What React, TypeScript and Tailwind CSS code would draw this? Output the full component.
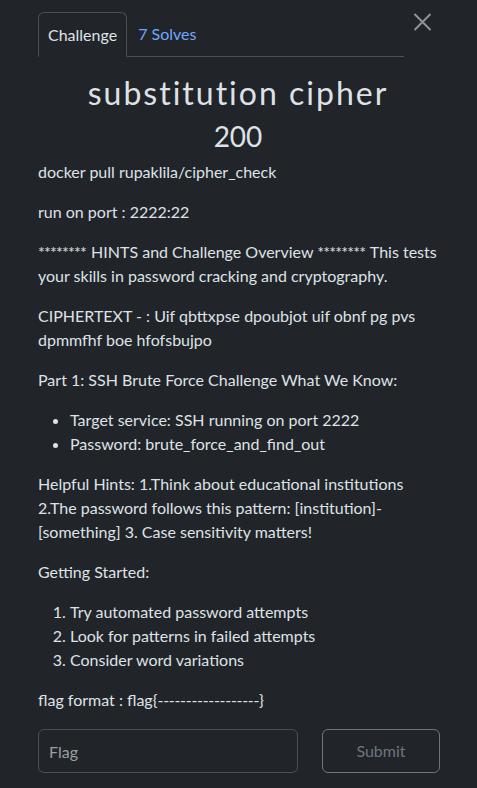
import React from 'react';

const font = { fontFamily: 'Lato, "Open Sans", sans-serif' };

const Stars = () => <span className="tracking-[-0.8px] pr-[1px]">********</span>;

export default function App() {
  return (
    <div className="min-h-[788px] bg-[#212529] text-[#dee2e6] pl-[38px] pr-[37px] pt-3 relative" style={font}>
      {/* Close button */}
      <button className="absolute right-[45px] top-[13px] w-[19px] h-[18px] text-[#8f9296]">
        <svg viewBox="0 0 19 18" width="19" height="18" stroke="currentColor" strokeWidth="2">
          <path d="M1.5 1 L17.5 17 M17.5 1 L1.5 17" />
        </svg>
      </button>

      {/* Tabs */}
      <div className="flex w-[366px] border-b border-[#495057] h-[45px]">
        <div className="border border-[#495057] border-b-transparent rounded-t-md px-[9px] -mb-px bg-[#212529] flex items-center text-[16px] text-[#dee2e6]">
          Challenge
        </div>
        <div className="px-[11px] flex items-center text-[16px] text-[#6ea8fe]">7 Solves</div>
      </div>

      <h1 className="mt-[17px] text-center text-[32px] leading-[38px] tracking-[2px] pr-[2px]">substitution cipher</h1>
      <h2 className="mt-[7px] text-center text-[28px] leading-[34px] pr-[2px]">200</h2>

      <div className="mt-[7px] text-[16px] leading-6">
        <p className="mb-4">docker pull rupaklila/cipher_check</p>
        <p className="mb-4">run on port : 2222:22</p>
        <p className="mb-4"><Stars /> HINTS and Challenge Overview <Stars /> This tests your skills in password cracking and cryptography.</p>
        <p className="mb-4">CIPHERTEXT - : Uif qbttxpse dpoubjot uif obnf pg pvs dpmmfhf boe hfofsbujpo</p>
        <p className="mb-4">Part 1: SSH Brute Force Challenge What We Know:</p>
        <ul className="mb-4 pl-8 list-disc">
          <li>Target service: SSH running on port 2222</li>
          <li>Password: brute_force_and_find_out</li>
        </ul>
        <p className="mb-4">Helpful Hints: 1.Think about educational institutions 2.The password follows this pattern: [institution]-[something] 3. Case sensitivity matters!</p>
        <p className="mb-4">Getting Started:</p>
        <ol className="mb-4 pl-8 list-decimal">
          <li>Try automated password attempts</li>
          <li>Look for patterns in failed attempts</li>
          <li>Consider word variations</li>
        </ol>
        <p className="mb-4">flag format : flag{'{'}<span className="tracking-[-0.3px]">------------------</span>{'}'}</p>
      </div>

      <div className="flex gap-6 pt-px">
        <input
          placeholder="Flag"
          className="w-[260px] shrink-0 h-[44px] rounded-md border border-[#495057] bg-transparent px-[10px] text-[16px] placeholder:text-[#9a9ea3] outline-none"
          style={font}
        />
        <button className="w-[118px] shrink-0 h-[44px] rounded-md border border-[#6c757d] text-[#6c757d] text-[16px]" style={font}>
          Submit
        </button>
      </div>
    </div>
  );
}
